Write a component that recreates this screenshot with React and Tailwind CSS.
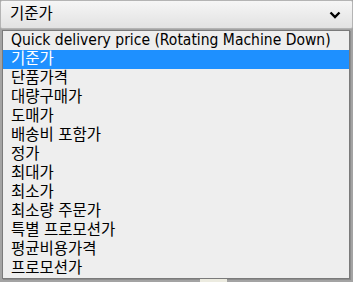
import React from 'react'

const options = [
  'Quick delivery price (Rotating Machine Down)',
  '기준가',
  '단품가격',
  '대량구매가',
  '도매가',
  '배송비 포함가',
  '정가',
  '최대가',
  '최소가',
  '최소량 주문가',
  '특별 프로모션가',
  '평균비용가격',
  '프로모션가',
]

function Chevron() {
  return (
    <svg width="12" height="8" viewBox="0 0 12 8" className="text-black">
      <path d="M1.5 1.5 L6 6 L10.5 1.5" fill="none" stroke="currentColor" strokeWidth="2.4" />
    </svg>
  )
}

function App() {
  const selected = 1

  return (
    <div
      className="w-[353px] h-[282px] overflow-hidden bg-[#a3a3a3]"
      style={{ fontFamily: '"DejaVu Sans Condensed", "DejaVu Sans", "Noto Sans CJK KR", sans-serif' }}
    >
      {/* the closed select */}
      <div className="h-[29px] mb-[1px] flex items-center justify-between pl-[9px] pr-[11px] border border-[#b4b4b4] rounded-[2px] bg-gradient-to-b from-[#f6f6f6] to-[#e2e2e2] text-[15.5px] text-black">
        <span>기준가</span>
        <Chevron />
      </div>

      {/* open list */}
      <div className="ml-[2px] w-[348px] border border-[#7a7a7a] bg-[#eeeeee] shadow-[1px_1px_0_#8c8c8c]">
        {options.map((opt, i) => (
          <div
            key={opt}
            className={
              'h-[19px] leading-[19px] pl-[8px] text-[15.5px] whitespace-nowrap ' +
              (i === selected ? 'bg-[#1e90ff] text-white' : 'text-black')
            }
          >
            {opt}
          </div>
        ))}
      </div>

      <div className="ml-[200px] w-[27px] h-[4px] bg-[#ecebe0]" />
    </div>
  )
}

export default App
